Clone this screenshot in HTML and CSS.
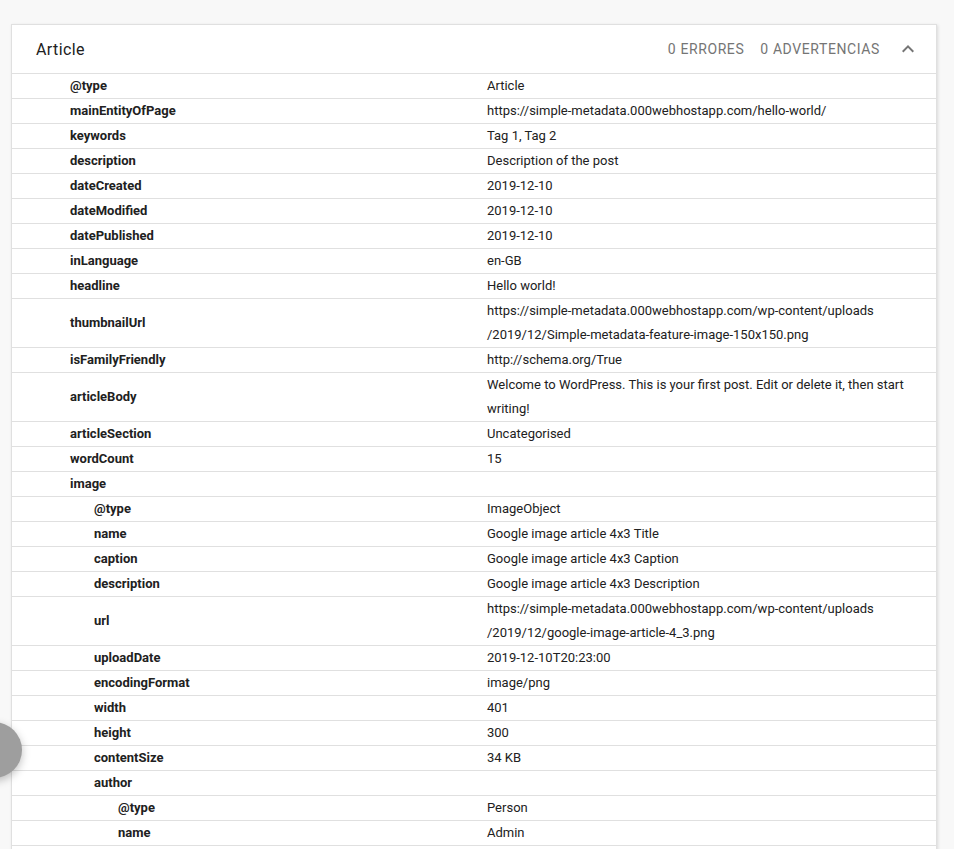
FILE: index.html
```html
<!DOCTYPE html>
<html>
<head>
	<meta charset="UTF-8">
	<title>Article</title>
	<link rel="stylesheet" href="styles.css">
</head>
<body>
	<div class="card">
		<div class="card-head">
			<span class="title">Article</span>
			<span class="count">0 errores</span>
			<span class="count">0 advertencias</span>
			<svg class="toggle" width="24" height="24" viewBox="0 0 24 24"><path d="M12 8l-6 6 1.41 1.41L12 10.83l4.59 4.58L18 14z"/></svg>
		</div>
		<table class="props">
			<tr><td class="k">@type</td><td class="v">Article</td></tr>
			<tr><td class="k">mainEntityOfPage</td><td class="v">https://simple-metadata.000webhostapp.com/hello-world/</td></tr>
			<tr><td class="k">keywords</td><td class="v">Tag 1, Tag 2</td></tr>
			<tr><td class="k">description</td><td class="v">Description of the post</td></tr>
			<tr><td class="k">dateCreated</td><td class="v">2019-12-10</td></tr>
			<tr><td class="k">dateModified</td><td class="v">2019-12-10</td></tr>
			<tr><td class="k">datePublished</td><td class="v">2019-12-10</td></tr>
			<tr><td class="k">inLanguage</td><td class="v">en-GB</td></tr>
			<tr><td class="k">headline</td><td class="v">Hello world!</td></tr>
			<tr><td class="k">thumbnailUrl</td><td class="v">https://simple-metadata.000webhostapp.com/wp-content/uploads<wbr>/2019/12/Simple-metadata-feature-image-150x150.png</td></tr>
			<tr><td class="k">isFamilyFriendly</td><td class="v">http://schema.org/True</td></tr>
			<tr><td class="k">articleBody</td><td class="v">Welcome to WordPress. This is your first post. Edit or delete it, then start writing!</td></tr>
			<tr><td class="k">articleSection</td><td class="v">Uncategorised</td></tr>
			<tr><td class="k">wordCount</td><td class="v">15</td></tr>
			<tr><td class="k">image</td><td class="v"></td></tr>
			<tr><td class="k l1">@type</td><td class="v">ImageObject</td></tr>
			<tr><td class="k l1">name</td><td class="v">Google image article 4x3 Title</td></tr>
			<tr><td class="k l1">caption</td><td class="v">Google image article 4x3 Caption</td></tr>
			<tr><td class="k l1">description</td><td class="v">Google image article 4x3 Description</td></tr>
			<tr><td class="k l1">url</td><td class="v">https://simple-metadata.000webhostapp.com/wp-content/uploads<wbr>/2019/12/google-image-article-4_3.png</td></tr>
			<tr><td class="k l1">uploadDate</td><td class="v">2019-12-10T20:23:00</td></tr>
			<tr><td class="k l1">encodingFormat</td><td class="v">image/png</td></tr>
			<tr><td class="k l1">width</td><td class="v">401</td></tr>
			<tr><td class="k l1">height</td><td class="v">300</td></tr>
			<tr><td class="k l1">contentSize</td><td class="v">34 KB</td></tr>
			<tr><td class="k l1">author</td><td class="v"></td></tr>
			<tr><td class="k l2">@type</td><td class="v">Person</td></tr>
			<tr><td class="k l2">name</td><td class="v">Admin</td></tr>
		</table>
	</div>
	<div class="fab">+</div>
</body>
</html>
```

FILE: styles.css
```css
body { margin: 0; padding: 24px 17px 0 11px; background: #f8f8f8; font-family: Roboto, "Liberation Sans", sans-serif; color: #212121; overflow: hidden; }
.card { background: #fff; border: 1px solid #e0e0e0; box-shadow: 1px 1px 3px rgba(0,0,0,.12); padding-bottom: 40px; }
.card-head { display: flex; align-items: center; gap: 16px; height: 48px; padding: 0 16px 0 24px; border-bottom: 1px solid #e0e0e0; }
.title { flex: 1; font-size: 16px; letter-spacing: .4px; }
.count { font-size: 14px; color: #757575; letter-spacing: .6px; text-transform: uppercase; }
.toggle { fill: #757575; }
.props { width: 100%; border-collapse: collapse; font-size: 13px; line-height: 24px; }
.props td { border-bottom: 1px solid #e0e0e0; padding: 0; vertical-align: middle; }
.props td.k { width: 417px; padding-left: 58px; font-weight: bold; }
.props td.l1 { padding-left: 82px; width: 393px; }
.props td.l2 { padding-left: 106px; width: 369px; }
.props td.v { padding-right: 30px; }
.fab { position: absolute; left: -34px; top: 722px; width: 56px; height: 56px; border-radius: 50%; background: #9e9e9e; color: #fff; font-size: 20px; line-height: 56px; text-align: center; box-shadow: 0 3px 8px rgba(0,0,0,.25); }
```
